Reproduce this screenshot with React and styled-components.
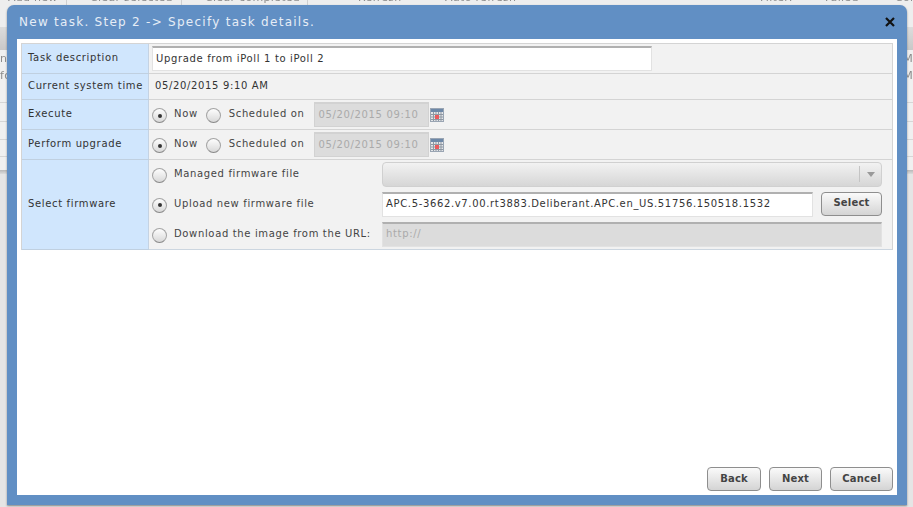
import styled, { createGlobalStyle } from 'styled-components';

const GlobalStyle = createGlobalStyle`
  html, body {
    margin: 0;
    padding: 0;
    background: #e5e5e5;
  }
  body {
    font-family: "DejaVu Sans", Verdana, sans-serif;
    font-size: 10px;
    letter-spacing: 0.65px;
    color: #333;
    overflow: hidden;
  }
`;

const Page = styled.div`
  position: relative;
  width: 913px;
  height: 507px;
  overflow: hidden;
`;

// the page behind the dialog, blurred and washed out
const Backdrop = styled.div`
  display: flex;
  flex-direction: column;
  height: 507px;
  background: #e5e5e5;
  color: #8c8c8c;
  font-size: 11px;
  letter-spacing: 0.3px;
  filter: blur(0.7px);
`;

const BackToolbar = styled.div`
  display: flex;
  align-items: flex-end;
  height: 27px;
  margin-top: -22px;
  padding-bottom: 22px;
  flex: none;
  box-sizing: content-box;
  background: #eee;
  overflow: hidden;
`;

const BackTool = styled.span`
  flex: none;
  box-sizing: border-box;
  width: ${props => props.$width}px;
  padding-left: ${props => props.$pad || 0}px;
  line-height: 14px;
  white-space: nowrap;
  overflow: hidden;
  border-right: ${props => (props.$sep ? '1px solid #d0d0d0' : '0')};
`;

const BackHeader = styled.div`
  flex: none;
  height: 23px;
  background: linear-gradient(#dcdcdc, #c8c8c8);
`;

const BackRow = styled.div`
  flex: none;
  display: flex;
  justify-content: space-between;
  align-items: center;
  height: ${props => props.$height}px;
  background: #f0f0f0;
  border-bottom: 1px solid ${props => (props.$line ? '#d6d6d6' : 'transparent')};
  box-sizing: border-box;
  overflow: hidden;
`;

const BackPager = styled.div`
  flex: none;
  height: 4px;
  background: linear-gradient(#b8b8b8, #dcdcdc);
`;

const Dialog = styled.div`
  position: absolute;
  left: 7px;
  top: 5px;
  width: 900px;
  height: 500px;
  display: flex;
  flex-direction: column;
  box-sizing: border-box;
  padding: 0 10px 10px;
  background: #618fc4;
  border-radius: 7px 7px 0 0;
  box-shadow: 0 1px 2px rgba(60, 60, 60, 0.55);
`;

const Header = styled.div`
  display: flex;
  align-items: center;
  justify-content: space-between;
  height: 34px;
  flex: none;
  padding: 0 2px;
`;

const Title = styled.span`
  color: #e6edf6;
  font-size: 12px;
  letter-spacing: 1.27px;
`;

const CloseIcon = styled.svg`
  width: 10px;
  height: 10px;
`;

const Body = styled.div`
  flex: 1;
  display: flex;
  flex-direction: column;
  padding: 4px;
  background: #fff;
`;

const Table = styled.div`
  display: flex;
  flex-direction: column;
  border: 1px solid #d4d4d4;
  border-bottom-color: #ccd6e0;
  background: #f2f2f2;
`;

const Row = styled.div`
  display: grid;
  grid-template-columns: 127px 1fr;
  height: ${props => props.$height}px;
  border-bottom: 1px solid #d4d4d4;
  box-sizing: border-box;

  &:last-child {
    border-bottom: 0;
  }
`;

const Label = styled.div`
  display: flex;
  align-items: center;
  padding: 0 0 ${props => props.$lift || 2}px 6px;
  background: #d0e6fd;
  border-right: 1px solid #c5d3e3;
  box-shadow: 0 1px 0 #c0d0e0;
`;

const Cell = styled.div`
  display: flex;
  align-items: center;
  padding-left: 3px;
`;

const TextCell = styled(Cell)`
  padding: 0 0 2px 6px;
`;

const TextInput = styled.div`
  display: flex;
  align-items: center;
  box-sizing: border-box;
  width: ${props => props.$width}px;
  height: 25px;
  padding: 0 0 2px 3px;
  background: ${props => (props.$disabled ? '#dcdcdc' : '#fff')};
  color: ${props => (props.$disabled ? '#aaa' : '#333')};
  border: 1px solid #e2e2e2;
  border-top: 2px solid #b0b0b0;
`;

const Radio = styled.span`
  display: flex;
  align-items: center;
  justify-content: center;
  box-sizing: border-box;
  flex: none;
  width: 15px;
  height: 15px;
  margin-top: 4px;
  border-radius: 50%;
  border: 1px solid #a4a4a4;
  border-bottom-color: #888;
  background: linear-gradient(#fdfdfd, #d8d8d8);

  &::after {
    content: '';
    display: ${props => (props.$checked ? 'block' : 'none')};
    width: 4px;
    height: 4px;
    border-radius: 50%;
    background: #333;
  }
`;

const Option = styled.span`
  display: flex;
  align-items: center;
  gap: 7px;
  margin-top: -2px;
  margin-right: ${props => props.$gap || 0}px;
  color: #444;
`;

const ScheduledOption = styled(Option)`
  gap: 8px;
`;

const DateField = styled(TextInput)`
  margin-left: 10px;
  padding-left: 3px;
  border-color: #d2d2d2;
`;

const CalendarIcon = styled.svg`
  width: 14px;
  height: 14px;
  margin-left: 1px;
`;

const FirmwareCell = styled.div`
  padding-left: 3px;
`;

const FirmwareGrid = styled.div`
  display: grid;
  grid-template-columns: 230px 1fr;
  grid-auto-rows: 30px;
  width: 730px;
  height: 90px;
  margin-top: -1px;
  align-items: center;
`;

const Select = styled.div`
  display: flex;
  align-items: center;
  justify-content: flex-end;
  box-sizing: border-box;
  height: 25px;
  background: linear-gradient(#f2f2f2, #d6d6d6);
  border: 1px solid #d0d0d0;
  border-radius: 4px;
`;

const Caret = styled.span`
  display: flex;
  align-items: center;
  justify-content: center;
  width: 21px;
  height: 16px;
  border-left: 1px solid #c4c4c4;

  &::after {
    content: '';
    border-left: 4px solid transparent;
    border-right: 4px solid transparent;
    border-top: 5px solid #999;
  }
`;

const UploadRow = styled.div`
  display: flex;
  gap: 8px;
`;

const Button = styled.button`
  box-sizing: border-box;
  width: ${props => props.$width}px;
  height: 24px;
  padding: 0 0 2px;
  font-family: inherit;
  font-size: 10px;
  font-weight: bold;
  letter-spacing: 0.2px;
  color: #444;
  background: linear-gradient(#fafafa, #d4d4d4);
  border: 1px solid #8e8e8e;
  border-radius: 4px;
`;

const Footer = styled.div`
  display: flex;
  justify-content: flex-end;
  gap: 8px;
  margin-top: auto;
`;

const dateValue = '05/20/2015 09:10';

const Calendar = () => (
  <CalendarIcon viewBox="0 0 14 14">
    <rect x="0.5" y="0.5" width="13" height="13" fill="#e4e6e9" stroke="#9aa5b3" />
    <rect x="1" y="1" width="12" height="3" fill="#6d88a8" />
    <path d="M1 6.5h12M1 9h12M1 11.5h12M3.5 4v9M6 4v9M8.5 4v9M11 4v9" stroke="#8f98a3" strokeWidth="1" />
    <rect x="5" y="7" width="4" height="4" fill="#ea5a5e" />
  </CalendarIcon>
);

const ScheduleCell = () => (
  <Cell>
    <Option $gap={8}>
      <Radio $checked />
      Now
    </Option>
    <ScheduledOption>
      <Radio />
      Scheduled on
    </ScheduledOption>
    <DateField $width={115} $disabled>
      {dateValue}
    </DateField>
    <Calendar />
  </Cell>
);

const App = () => (
  <Page>
    <GlobalStyle />
    <Backdrop>
      <BackToolbar>
        <BackTool $width={67} $pad={8} $sep>Add new</BackTool>
        <BackTool $width={115} $pad={23} $sep>Clear selected</BackTool>
        <BackTool $width={126} $pad={23} $sep>Clear completed</BackTool>
        <BackTool $width={117} $pad={50}>Refresh</BackTool>
        <BackTool $width={335} $pad={20}>Auto refresh</BackTool>
        <BackTool $width={65}>Filter:</BackTool>
        <BackTool $width={70}>Failed</BackTool>
        <BackTool $width={18}>Com</BackTool>
      </BackToolbar>
      <BackHeader />
      <BackRow $height={17}>
        <span>nd</span>
        <span>M</span>
      </BackRow>
      <BackRow $height={18}>
        <span>fo</span>
        <span>M</span>
      </BackRow>
      <BackRow $height={18} $line />
      <BackRow $height={19} $line />
      <BackRow $height={18} $line />
      <BackRow $height={17} $line />
      <BackRow $height={13} />
      <BackPager />
    </Backdrop>
    <Dialog>
      <Header>
        <Title>New task. Step 2 -&gt; Specify task details.</Title>
        <CloseIcon viewBox="0 0 10 10">
          <path d="M1 1l8 8M9 1l-8 8" stroke="#111" strokeWidth="2.2" />
        </CloseIcon>
      </Header>
      <Body>
        <Table>
          <Row $height={30}>
            <Label>Task description</Label>
            <Cell>
              <TextInput $width={500}>Upgrade from iPoll 1 to iPoll 2</TextInput>
            </Cell>
          </Row>
          <Row $height={26}>
            <Label>Current system time</Label>
            <TextCell>05/20/2015 9:10 AM</TextCell>
          </Row>
          <Row $height={30}>
            <Label>Execute</Label>
            <ScheduleCell />
          </Row>
          <Row $height={30}>
            <Label>Perform upgrade</Label>
            <ScheduleCell />
          </Row>
          <Row $height={89}>
            <Label $lift={3}>Select firmware</Label>
            <FirmwareCell>
              <FirmwareGrid>
                <Option>
                  <Radio />
                  Managed firmware file
                </Option>
                <Select>
                  <Caret />
                </Select>
                <Option>
                  <Radio $checked />
                  Upload new firmware file
                </Option>
                <UploadRow>
                  <TextInput $width={431}>APC.5-3662.v7.00.rt3883.Deliberant.APC.en_US.51756.150518.1532</TextInput>
                  <Button $width={61}>Select</Button>
                </UploadRow>
                <Option>
                  <Radio />
                  Download the image from the URL:
                </Option>
                <TextInput $disabled>http://</TextInput>
              </FirmwareGrid>
            </FirmwareCell>
          </Row>
        </Table>
        <Footer>
          <Button $width={54}>Back</Button>
          <Button $width={53}>Next</Button>
          <Button $width={63}>Cancel</Button>
        </Footer>
      </Body>
    </Dialog>
  </Page>
);

export default App;
